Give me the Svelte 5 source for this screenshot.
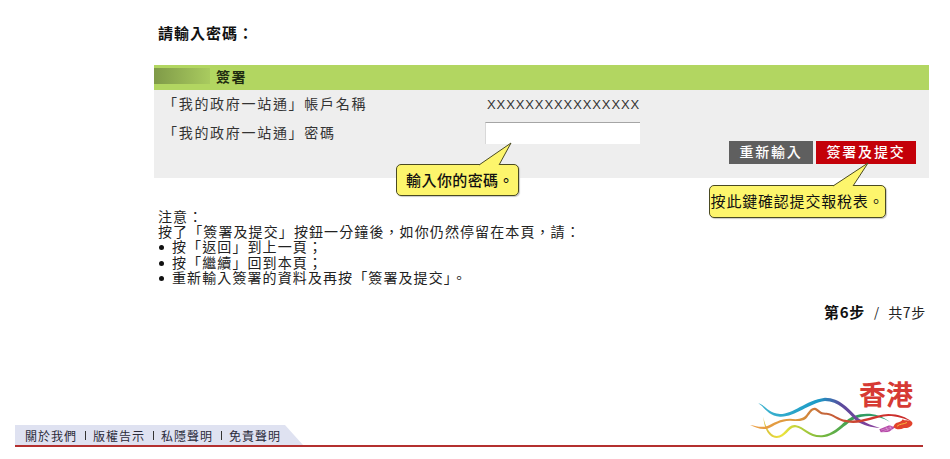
<script>
  const notes = [
    '按「返回」到上一頁\uFF1B',
    '按「繼續」回到本頁\uFF1B',
    '重新輸入簽署的資料及再按「簽署及提交」。'
  ];
  const links = ['關於我們', '版權告示', '私隱聲明', '免責聲明'];
</script>

<div class="page">
  <main class="content">
    <h1>請輸入密碼&#65306;</h1>

    <section class="panel">
      <div class="panel-head">
        <span class="swatch"></span>
        <span class="panel-title">簽署</span>
      </div>
      <div class="panel-body">
        <div class="row first">
          <span class="label">「我的政府一站通」帳戶名稱</span>
          <span class="value">XXXXXXXXXXXXXXXX</span>
        </div>
        <div class="row second">
          <span class="label">「我的政府一站通」密碼</span>
          <input class="password" type="password" />
        </div>
        <div class="actions">
          <button class="btn grey">重新輸入</button>
          <button class="btn red">簽署及提交</button>
        </div>
      </div>

      <div class="callout pw">
        <svg class="tail" width="40" height="24" viewBox="0 0 40 24">
          <path d="M2 23 L34 1 L22 23" fill="#fdf56c" stroke="#4a4a22" stroke-width="1" stroke-linejoin="round" />
        </svg>
        輸入你的密碼。
      </div>
      <div class="callout submit">
        <svg class="tail" width="44" height="25" viewBox="0 0 44 25">
          <path d="M2 24 L37 1 L22 24" fill="#fdf56c" stroke="#4a4a22" stroke-width="1" stroke-linejoin="round" />
        </svg>
        按此鍵確認提交報稅表。
      </div>
    </section>

    <section class="notes">
      <p>注意&#65306;</p>
      <p>按了「簽署及提交」按鈕一分鐘後&#65292;如你仍然停留在本頁&#65292;請&#65306;</p>
      <ul>
        {#each notes as note}
          <li>{note}</li>
        {/each}
      </ul>
    </section>

    <div class="step"><b>第6步</b><i>/</i><span>共7步</span></div>
  </main>

  <footer class="footer">
    <nav class="tab">
      {#each links as link, i}
        {#if i > 0}<span class="sep"></span>{/if}
        <span>{link}</span>
      {/each}
    </nav>
    <div class="brand">
      <span class="brand-name">香港</span>
      <svg class="ribbon" width="170" height="42" viewBox="45 69 510 126" fill="none" stroke-linecap="round">
        <defs>
          <linearGradient id="a" gradientUnits="userSpaceOnUse" x1="85" y1="0" x2="450" y2="0">
            <stop offset="0" stop-color="#3fb4cf" />
            <stop offset="0.5" stop-color="#1b9ac6" />
            <stop offset="0.68" stop-color="#5a4a9c" />
            <stop offset="1" stop-color="#8e3f9c" />
          </linearGradient>
          <linearGradient id="b" gradientUnits="userSpaceOnUse" x1="60" y1="0" x2="545" y2="0">
            <stop offset="0" stop-color="#eda045" />
            <stop offset="0.3" stop-color="#d9973c" />
            <stop offset="0.45" stop-color="#c4683a" />
            <stop offset="0.75" stop-color="#d0352f" />
            <stop offset="1" stop-color="#c92a2a" />
          </linearGradient>
          <linearGradient id="c" gradientUnits="userSpaceOnUse" x1="100" y1="0" x2="480" y2="0">
            <stop offset="0" stop-color="#d8c03a" />
            <stop offset="0.15" stop-color="#ece33c" />
            <stop offset="0.45" stop-color="#7cba3c" />
            <stop offset="0.75" stop-color="#2f9a5c" />
            <stop offset="1" stop-color="#3aa07a" />
          </linearGradient>
        </defs>
        <path d="M100 140 C104 165 118 196 140 198 C165 198 172 160 198 166 C222 170 240 198 276 196 C320 190 340 150 372 138 C405 126 445 128 480 156 C445 134 405 134 376 146 C345 160 322 198 276 202 C236 204 220 176 198 172 C176 168 170 204 140 204 C112 202 102 168 100 140 Z" fill="url(#c)" />
        <path d="M85 100 C110 108 115 130 150 132 C190 132 225 92 285 83 C330 83 360 120 385 145 C405 160 430 168 450 174 C425 172 400 166 378 152 C350 122 325 94 285 93 C235 100 195 142 150 140 C115 138 105 112 85 100 Z" fill="url(#a)" />
        <path d="M60 165 C80 168 92 174 112 168 C130 160 150 146 180 146 C205 150 222 146 232 130 C240 118 248 110 258 114 C270 120 272 130 290 128 C312 130 322 146 350 150 C390 158 425 136 475 132 C505 132 530 142 545 155 C525 146 500 138 475 138 C430 142 392 166 350 157 C320 152 310 136 290 134 C268 136 264 124 254 120 C244 120 240 134 228 146 C214 156 200 152 180 152 C150 152 132 168 112 176 C92 180 78 172 60 165 Z" fill="url(#b)" />
        <path d="M448 178 L478 166 L496 172 L476 186 L452 187 Z" fill="#b548a8" />
        <path d="M454 180 L488 170 M458 185 L482 176 M466 168 L476 186 M478 166 L486 180" stroke="#f2d0ec" stroke-width="1.2" />
        <path d="M490 170 C498 152 510 162 518 148 C524 154 536 148 546 156 C552 164 538 176 522 174 C510 180 498 180 490 170 Z" fill="#e2432c" />
        <path d="M502 168 C510 160 520 164 530 158" stroke="#f7b73c" stroke-width="3" />
      </svg>
    </div>
  </footer>
</div>

<style>
  :global(body) {
    margin: 0;
    background: #fff;
  }
  .page {
    width: 950px;
    height: 459px;
    display: flex;
    flex-direction: column;
    overflow: hidden;
    color: #222;
    font-family: "Noto Sans CJK TC", "Liberation Sans", sans-serif;
  }
  .content {
    flex: 1;
    padding: 23px 21px 0 154px;
  }
  h1 {
    margin: 0 0 23px 4px;
    font-size: 15px;
    line-height: 19px;
    letter-spacing: 1px;
    font-weight: 700;
    color: #111;
  }
  .panel {
    position: relative;
    background: #eeeeee;
  }
  .panel-head {
    height: 25px;
    display: flex;
    align-items: center;
    background: #b2d661;
  }
  .swatch {
    width: 56px;
    height: 16px;
    margin-bottom: 3px;
    background: linear-gradient(90deg, #7f9a48, #a9cb5f);
  }
  .panel-title {
    margin-left: 6px;
    margin-bottom: 3px;
    font-size: 14px;
    font-weight: 700;
    letter-spacing: 1.5px;
    color: #1d2a10;
  }
  .panel-body {
    height: 88px;
    padding-left: 9px;
    padding-right: 13px;
    box-sizing: border-box;
  }
  .row {
    display: flex;
    align-items: center;
    font-size: 14px;
    letter-spacing: 1.7px;
    color: #333;
  }
  .row.first {
    height: 28px;
  }
  .row.second {
    height: 22px;
    margin-top: 4px;
  }
  .label {
    width: 322px;
    flex: none;
    padding-bottom: 2px;
  }
  .value {
    padding-left: 2px;
    font-family: "Liberation Sans", sans-serif;
    font-size: 13px;
    letter-spacing: 0.9px;
    color: #333;
  }
  .password {
    width: 155px;
    height: 22px;
    box-sizing: border-box;
    border: 0;
    border-top: 1px solid #a5a5a5;
    border-left: 1px solid #d8d8d8;
    background: #fff;
    padding: 0;
  }
  .actions {
    display: flex;
    justify-content: flex-end;
    gap: 3px;
    margin-top: -3px;
  }
  .btn {
    height: 23px;
    border: 0;
    padding: 0 0 3px;
    color: #fff;
    font-family: inherit;
    font-size: 14px;
    font-weight: 500;
    letter-spacing: 1.8px;
  }
  .grey {
    width: 84px;
    background: #5f5f5f;
  }
  .red {
    width: 100px;
    background: #c40009;
  }
  .callout {
    position: absolute;
    box-sizing: border-box;
    display: flex;
    align-items: center;
    justify-content: center;
    white-space: nowrap;
    padding-bottom: 2px;
    border: 1px solid #4a4a22;
    border-radius: 5px;
    background: #fdf56c;
    box-shadow: 1px 1px 1px #c9c9c9;
    color: #111;
    font-size: 15px;
    font-weight: 500;
  }
  .callout.pw {
    left: 242px;
    top: 99px;
    width: 123px;
    height: 32px;
    padding-left: 5px;
    letter-spacing: 0.4px;
  }
  .callout.submit {
    left: 555px;
    top: 120px;
    width: 177px;
    height: 33px;
    letter-spacing: 0.8px;
    font-weight: 400;
  }
  .tail {
    position: absolute;
    overflow: visible;
  }
  .pw .tail {
    left: 80px;
    top: -23px;
  }
  .submit .tail {
    left: 121px;
    top: -24px;
  }
  .notes {
    margin: 31px 0 0 4px;
    font-size: 14px;
    line-height: 15.2px;
    letter-spacing: 1.1px;
    color: #222;
  }
  .notes p {
    margin: 0;
  }
  .notes ul {
    margin: 0;
    padding: 0;
    list-style: none;
  }
  .notes li {
    position: relative;
    padding-left: 14px;
  }
  .notes li::before {
    content: "";
    position: absolute;
    left: 1px;
    top: 6px;
    width: 5px;
    height: 5px;
    border-radius: 50%;
    background: #111;
  }
  .step {
    display: flex;
    justify-content: flex-end;
    align-items: center;
    gap: 9px;
    margin-top: 18px;
    padding-right: 3px;
    font-size: 14px;
    line-height: 18px;
  }
  .step b {
    font-size: 15px;
    letter-spacing: 0.7px;
    font-weight: 700;
    color: #111;
  }
  .step i {
    font-style: normal;
    font-size: 13px;
  }
  .step span {
    letter-spacing: 0.7px;
  }
  .footer {
    margin: 0 27px 12px 15px;
    display: flex;
    justify-content: space-between;
    align-items: flex-end;
    border-bottom: 2px solid #b4302f;
  }
  .tab {
    width: 288px;
    height: 20px;
    box-sizing: border-box;
    padding-left: 10px;
    display: flex;
    align-items: center;
    background: #dfe2f1;
    clip-path: polygon(0 0, 270px 0, 100% 100%, 0 100%);
    color: #2b2b3a;
    font-size: 12px;
    letter-spacing: 1px;
  }
  .sep {
    width: 1px;
    height: 9px;
    margin: 0 7.5px;
    background: #333;
  }
  .brand {
    position: relative;
    width: 172px;
    height: 62px;
    margin-right: 6px;
    margin-bottom: 10px;
  }
  .brand-name {
    position: absolute;
    right: 4px;
    top: 6px;
    font-size: 27px;
    line-height: 30px;
    font-weight: 700;
    color: #d63a34;
  }
  .ribbon {
    position: absolute;
    left: 0;
    bottom: 0;
    overflow: visible;
  }
</style>
